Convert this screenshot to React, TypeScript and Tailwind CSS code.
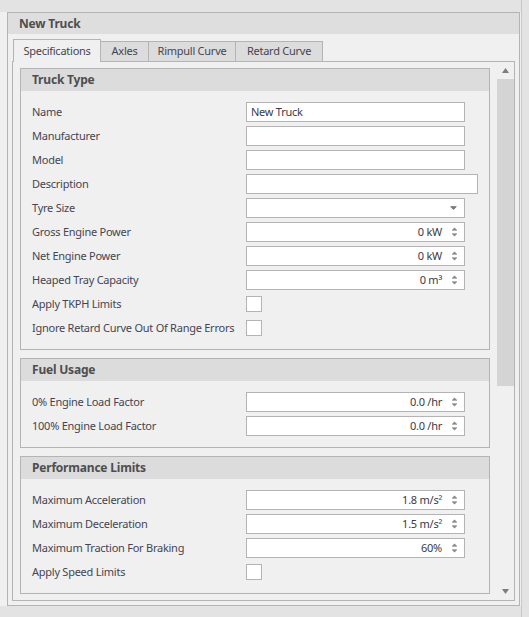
import React from 'react';

const SpinArrows = () => (
  <svg width="7" height="12" viewBox="0 0 7 12" className="shrink-0">
    <path d="M1 4 L3.5 1.5 L6 4 Z" fill="#8a8a8a" />
    <rect x="1" y="4" width="5" height="0.8" fill="#a0a0a0" />
    <rect x="1" y="7.2" width="5" height="0.8" fill="#a0a0a0" />
    <path d="M1 8 L6 8 L3.5 10.5 Z" fill="#8a8a8a" />
  </svg>
);

const ComboArrow = () => (
  <svg width="7" height="4" viewBox="0 0 7 4" className="shrink-0">
    <rect x="0.5" y="0" width="6" height="1" fill="#8a8a8a" />
    <path d="M0.5 1 L6.5 1 L3.5 4 Z" fill="#7a7a7a" />
  </svg>
);

const TextBox: React.FC<{ value?: string; wide?: boolean }> = ({ value = '', wide }) => (
  <div
    className={`${wide ? 'w-[232px]' : 'w-[219px]'} h-[20px] bg-white border border-[#b4b4b4] pl-[4px] flex items-center text-[11px] tracking-[-0.25px] text-[#3a3a4a]`}
  >
    {value}
  </div>
);

const ComboBox = () => (
  <div className="w-[219px] h-[20px] bg-white border border-[#b4b4b4] pr-[7px] flex items-center justify-end">
    <ComboArrow />
  </div>
);

const SpinBox: React.FC<{ value: string }> = ({ value }) => (
  <div className="w-[219px] h-[20px] bg-white border border-[#b4b4b4] pr-[6px] flex items-center justify-end gap-[9px] text-[11px] tracking-[-0.25px] text-[#3a3a4a]">
    <span>{value}</span>
    <SpinArrows />
  </div>
);

const CheckBox = () => <div className="w-[16px] h-[16px] bg-white border border-[#b4b4b4]" />;

const Row: React.FC<{ label: string; children: React.ReactNode }> = ({ label, children }) => (
  <div className="flex items-center h-[20px]">
    <div className="w-[214px] text-[11px] tracking-[-0.25px] text-[#454550] whitespace-nowrap">{label}</div>
    {children}
  </div>
);

const Group: React.FC<{ title: string; children: React.ReactNode }> = ({ title, children }) => (
  <div className="border border-[#b4b4b4] mb-[8px] shrink-0">
    <div className="h-[22px] bg-[#dcdcdc] pl-[11px] flex items-center text-[12px] font-bold tracking-[-0.2px] text-[#4e4e4e]">
      {title}
    </div>
    <div className="pt-[11px] pb-[11px] pl-[11px] flex flex-col gap-[4px]">{children}</div>
  </div>
);

const tabs = [
  { label: 'Specifications', w: 'w-[88px]', active: true },
  { label: 'Axles', w: 'w-[48px]', active: false },
  { label: 'Rimpull Curve', w: 'w-[87px]', active: false },
  { label: 'Retard Curve', w: 'w-[87px]', active: false },
];

export default function App() {
  return (
    <div className="w-[529px] h-[617px] bg-[#e3e3e3] flex font-['Noto_Sans',sans-serif] overflow-hidden">
      <div className="w-[522px] border-r border-[#c8c8c8] flex flex-col">
        <div className="h-[12px] shrink-0" />
        <div className="h-[594px] bg-[#f0f0f0] pl-[7px] pr-[1px] shrink-0">
          {/* Panel */}
          <div className="h-[594px] border border-[#b4b4b4] flex flex-col">
            <div className="h-[21px] bg-[#dedede] pl-[11px] flex items-center text-[12px] font-bold tracking-[-0.2px] text-[#4e4e4e] shrink-0">
              New Truck
            </div>
            <div className="flex-1 flex flex-col px-[4px] pt-[5px] pb-[4px] min-h-0">
              {/* Tab strip */}
              <div className="flex items-end h-[22px] pl-[1px] shrink-0 relative z-10">
                {tabs.map((t) => (
                  <div
                    key={t.label}
                    className={`${t.w} flex items-center justify-center text-[11px] tracking-[-0.25px] text-[#454550] border-[#b4b4b4] border-t border-r ${
                      t.active
                        ? 'h-[23px] -mb-[1px] pt-[1px] bg-[#f0f0f0] border-l'
                        : 'h-[20px] bg-[#dcdcdc]'
                    }`}
                  >
                    {t.label}
                  </div>
                ))}
              </div>
              {/* Tab page */}
              <div className="flex-1 border border-[#b4b4b4] flex min-h-0">
                <div className="flex-1 px-[7px] pt-[6px] overflow-hidden flex flex-col">
                  <Group title="Truck Type">
                    <Row label="Name"><TextBox value="New Truck" /></Row>
                    <Row label="Manufacturer"><TextBox /></Row>
                    <Row label="Model"><TextBox /></Row>
                    <Row label="Description"><TextBox wide /></Row>
                    <Row label="Tyre Size"><ComboBox /></Row>
                    <Row label="Gross Engine Power"><SpinBox value="0 kW" /></Row>
                    <Row label="Net Engine Power"><SpinBox value="0 kW" /></Row>
                    <Row label="Heaped Tray Capacity"><SpinBox value="0 m³" /></Row>
                    <Row label="Apply TKPH Limits"><CheckBox /></Row>
                    <Row label="Ignore Retard Curve Out Of Range Errors"><CheckBox /></Row>
                  </Group>
                  <Group title="Fuel Usage">
                    <Row label="0% Engine Load Factor"><SpinBox value="0.0 /hr" /></Row>
                    <Row label="100% Engine Load Factor"><SpinBox value="0.0 /hr" /></Row>
                  </Group>
                  <Group title="Performance Limits">
                    <Row label="Maximum Acceleration"><SpinBox value="1.8 m/s²" /></Row>
                    <Row label="Maximum Deceleration"><SpinBox value="1.5 m/s²" /></Row>
                    <Row label="Maximum Traction For Braking"><SpinBox value="60%" /></Row>
                    <Row label="Apply Speed Limits"><CheckBox /></Row>
                  </Group>
                </div>
                {/* Scrollbar */}
                <div className="w-[17px] flex flex-col shrink-0">
                  <div className="h-[17px] flex items-center justify-center">
                    <svg width="7" height="5" viewBox="0 0 7 5">
                      <path d="M0 5 L3.5 0 L7 5 Z" fill="#7d7d7d" />
                    </svg>
                  </div>
                  <div className="flex-1 flex flex-col">
                    <div className="h-[307px] bg-[#d4d4d4]" />
                  </div>
                  <div className="h-[17px] flex items-center justify-center">
                    <svg width="7" height="5" viewBox="0 0 7 5">
                      <path d="M0 0 L7 0 L3.5 5 Z" fill="#7d7d7d" />
                    </svg>
                  </div>
                </div>
              </div>
            </div>
          </div>
        </div>
      </div>
    </div>
  );
}
